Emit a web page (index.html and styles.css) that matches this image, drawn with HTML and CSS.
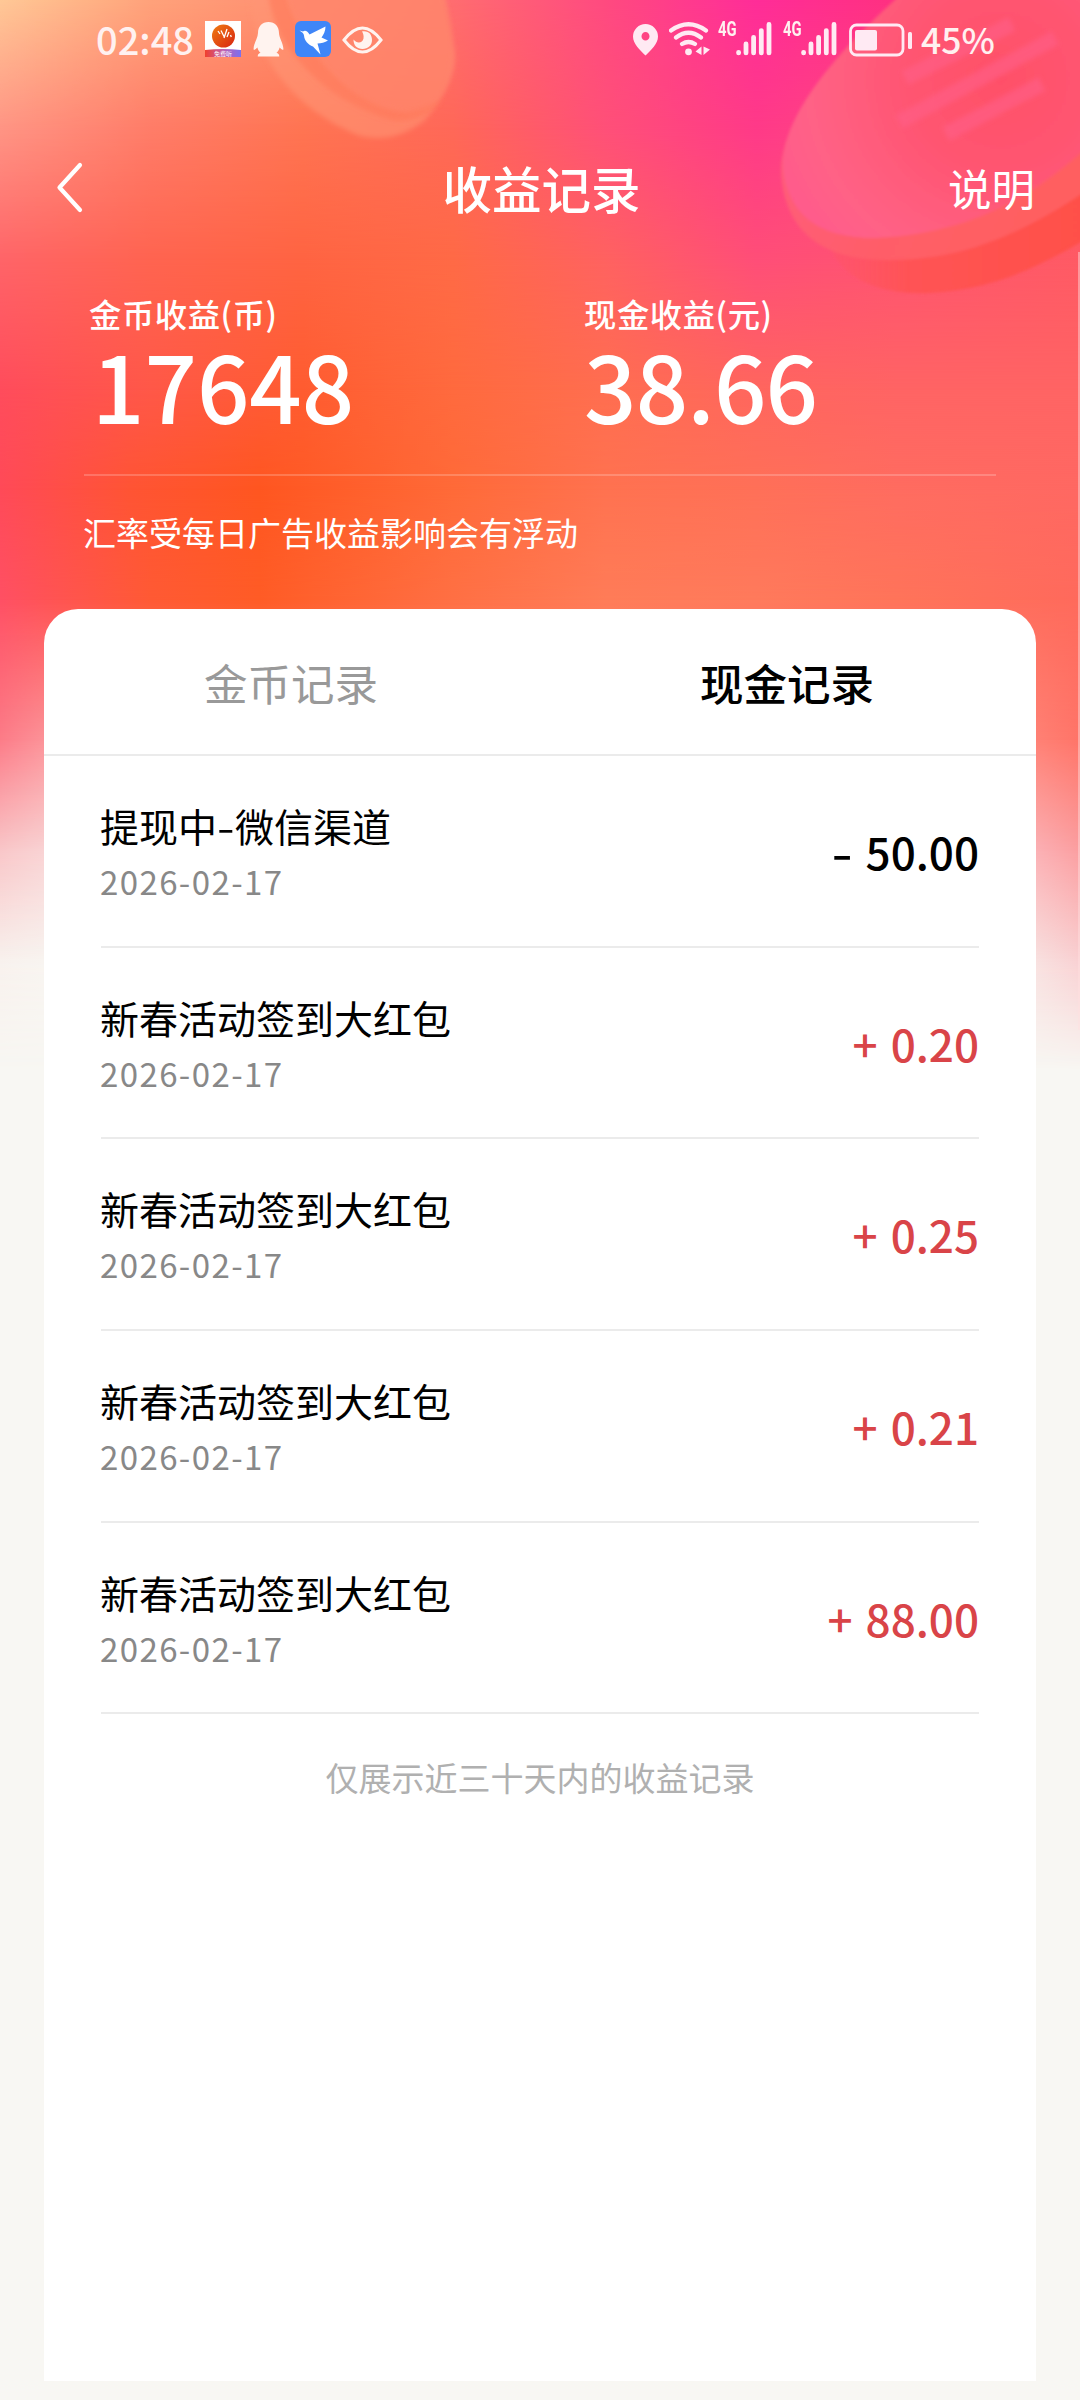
FILE: index.html
```html
<!DOCTYPE html>
<html lang="zh-CN">
<head>
<meta charset="utf-8">
<title>收益记录</title>
<link rel="stylesheet" href="styles.css">
</head>
<body>
<div class="screen">
  <div class="backdrop">
    <div class="band band-9"></div>
    <div class="band band-8"></div>
    <div class="band band-7"></div>
    <div class="band band-6"></div>
    <div class="band band-5"></div>
    <div class="band band-4"></div>
    <div class="band band-3"></div>
    <div class="band band-2"></div>
    <div class="band band-1"></div>
    <svg class="coins" width="1080" height="320" viewBox="0 0 1080 320">
      <defs>
        <linearGradient id="rim" x1="0" y1="0" x2="1" y2="0.4"><stop offset="0" stop-color="#ff5c84"/><stop offset=".6" stop-color="#ff5d68"/><stop offset="1" stop-color="#ff5f60"/></linearGradient>
        <radialGradient id="face" gradientUnits="userSpaceOnUse" cx="1000" cy="80" r="240"><stop offset="0" stop-color="#ff5068"/><stop offset=".35" stop-color="#ff5470"/><stop offset=".8" stop-color="#ff6286"/><stop offset="1" stop-color="#ff5a8c"/></radialGradient>
        <linearGradient id="shade" x1="0" y1="0" x2="1" y2="0"><stop offset="0" stop-color="#ff5560" stop-opacity=".3"/><stop offset=".3" stop-color="#ff5254"/><stop offset="1" stop-color="#ff5048"/></linearGradient>
        <filter id="soft"><feGaussianBlur stdDeviation="1.6"/></filter>
        <filter id="softer"><feGaussianBlur stdDeviation="2.5"/></filter>
      </defs>
      <path filter="url(#softer)" d="M250 -10C250 60 300 112 360 136Q395 144 425 120Q462 75 453 45L443 -10Z" fill="#ff9474" fill-opacity=".6"/>
      <path filter="url(#softer)" d="M268 -10C272 50 330 104 395 121Q425 122 442 100L407 111C350 108 300 45 285 -10Z" fill="#ff7456" fill-opacity=".55"/>
      <path filter="url(#softer)" d="M285 -10C300 45 350 108 407 111Q430 113 444 90Q462 50 442 -10Z" fill="#ff8068" fill-opacity=".55"/>
      <g filter="url(#soft)">
        <path d="M832 252C850 285 890 295 930 293C1000 288 1040 266 1095 234V120L900 180Z" fill="url(#shade)"/>
        <path d="M895 0C840 50 781 115 781 173C784 222 812 262 893 260C975 260 1040 222 1095 185V-10H905Z" fill="url(#rim)"/>
        <path d="M895 0C840 50 781 115 783 168C788 212 815 238 875 238C975 234 1040 192 1095 140V-10H905Z" fill="url(#face)"/>
      </g>
      <g filter="url(#softer)" stroke="#ff6088" stroke-width="15" stroke-opacity=".62">
        <path d="M905 78L1012 24M899 122L1055 38M946 134L1042 84"/>
      </g>
    </svg>
    <div class="edge"></div>
  </div>

  <header class="status">
    <div class="status-group left">
      <span class="clock">02:48</span>
      <svg class="app-icon" width="36" height="36" viewBox="0 0 36 36">
        <defs>
          <linearGradient id="swoosh" x1="0" y1="0" x2="1" y2="0"><stop offset="0" stop-color="#f0402c"/><stop offset=".5" stop-color="#c060b0"/><stop offset="1" stop-color="#7a70f0"/></linearGradient>
          <linearGradient id="ball" x1="0" y1="0" x2="1" y2="1"><stop offset="0" stop-color="#ef7d12"/><stop offset="1" stop-color="#d82412"/></linearGradient>
        </defs>
        <rect width="36" height="36" fill="#fff"/>
        <path d="M0 29Q18 27 36 29V36H0Z" fill="url(#swoosh)"/>
        <circle cx="18.500" cy="15" r="11.500" fill="url(#ball)"/>
        <path d="M13 10l2 3M16 9.500l3 6M19 17l3-9M22 16l2-5M25.500 14l.8 2" stroke="#fff" stroke-width="1.300" fill="none"/>
        <text class="app-label" x="18" y="34.500" text-anchor="middle">免费听</text>
      </svg>
      <svg class="penguin" width="31" height="36" viewBox="0 0 31 36">
        <path d="M15.500 1C9 1 5 5.500 5 12C5 17 .3 23 .6 28.500C1.500 29.500 3 28 4.400 26.500C5 29 6 30.500 7.500 31.800C5.800 32.500 4.500 33.500 4.800 35.500H26.200C26.500 33.500 25.200 32.500 23.500 31.800C25 30.500 26 29 26.600 26.500C28 28 29.500 29.500 30.400 28.500C30.700 23 26 17 26 12C26 5.500 22 1 15.500 1Z" fill="#fff3ef"/>
      </svg>
      <svg class="bird" width="36" height="36" viewBox="0 0 36 36">
        <rect width="36" height="36" rx="6" fill="#3f86f8"/>
        <path d="M4.500 9.500L8 10.500C10 8.800 12.800 10 14.500 13.500L30.500 5.500C30.500 10 28.500 14 26.500 16.500L33 19.500C30 21.500 26 22.500 22.500 22.500L25.500 33.500L18 25.500C13 23.500 9.500 20 9 14.500C8.800 12.500 7 11 4.500 9.500Z" fill="#fff"/>
      </svg>
      <svg class="eye" width="41" height="28" viewBox="0 0 41 28">
        <path d="M2 14Q20.500-10 39 14Q20.500 38 2 14Z" fill="none" stroke="#fff3ef" stroke-width="3"/>
        <path d="M20 5.500C27 4.500 30 9 30 14C30 19.500 26 23 20.500 23C15 23 11.500 19.500 11.500 13.500C15 18 20.500 17 21.500 12.500C22 9.500 21 7 20 5.500Z" fill="#fff3ef"/>
      </svg>
    </div>
    <div class="status-group right">
      <svg class="pin" width="25" height="32" viewBox="0 0 25 32">
        <path fill-rule="evenodd" d="M12.500 0A12.500 12.500 0 0 0 0 12.500C0 20 7 26 12.500 31.500C18 26 25 20 25 12.500A12.500 12.500 0 0 0 12.500 0ZM12.500 8A4 4.300 0 1 1 12.500 16.600A4 4.300 0 1 1 12.500 8Z" fill="#ffeaf3"/>
      </svg>
      <svg class="wifi" width="41" height="34" viewBox="0 0 41 34">
        <g fill="none" stroke="#ffeaf3" stroke-width="4.200" stroke-linecap="round">
          <path d="M2 8.500Q19.500-4 37 8.500M7 15.500Q19.500 6 32 15.500M13 22Q19.500 18 26 22"/>
        </g>
        <circle cx="19.500" cy="29.800" r="3.400" fill="#ffeaf3"/>
        <path d="M32.500 24.500V33L26.500 29.500ZM34.500 24.500V33L41 27.500Z" fill="#ffeaf3"/>
      </svg>
      <div class="signal">
        <span class="net">4G</span>
        <svg width="36" height="34" viewBox="0 0 36 34">
          <path d="M2.600 30.300V30.900M10 22V30.900M17.600 15.300V30.900M25.300 8.600V30.900M33 2.400V30.900" stroke="#ffeaf3" stroke-width="4.800" stroke-linecap="round"/>
        </svg>
      </div>
      <div class="signal">
        <span class="net">4G</span>
        <svg width="36" height="34" viewBox="0 0 36 34">
          <path d="M2.600 30.300V30.900M10 22V30.900M17.600 15.300V30.900M25.300 8.600V30.900M33 2.400V30.900" stroke="#ffeaf3" stroke-width="4.800" stroke-linecap="round"/>
        </svg>
      </div>
      <svg class="battery" width="64" height="34" viewBox="0 0 64 34">
        <rect x="1.500" y="2" width="52.500" height="30" rx="6" fill="none" stroke="#ffeaf3" stroke-width="2.800"/>
        <rect x="6" y="7" width="22" height="20.500" rx="2" fill="#ffeaf3"/>
        <rect x="59" y="9" width="4" height="17" rx="1.500" fill="#ffeaf3"/>
      </svg>
      <span class="percent">45%</span>
    </div>
  </header>

  <nav class="titlebar">
    <svg class="back" width="27" height="52" viewBox="0 0 27 52">
      <path d="M24 3L3.500 25.500L24 48" fill="none" stroke="#fff" stroke-width="4.200" stroke-linecap="round" stroke-linejoin="round"/>
    </svg>
    <h1 class="title">收益记录</h1>
    <span class="help">说明</span>
  </nav>

  <section class="summary">
    <div class="stat">
      <div class="stat-label">金币收益(币)</div>
      <div class="stat-value coins-total">17648</div>
    </div>
    <div class="stat">
      <div class="stat-label">现金收益(元)</div>
      <div class="stat-value cash-total">38.66</div>
    </div>
  </section>
  <p class="notice">汇率受每日广告收益影响会有浮动</p>

  <main class="card">
    <div class="tabs">
      <div class="tab">金币记录</div>
      <div class="tab active">现金记录</div>
    </div>
    <ul class="records">
      <li class="record"><div><div class="name">提现中<span class="dash">-</span>微信渠道</div><div class="date">2026-02-17</div></div><div class="amount"><span class="sign minus">-</span>50.00</div></li>
      <li class="record"><div><div class="name">新春活动签到大红包</div><div class="date">2026-02-17</div></div><div class="amount income"><span class="sign">+</span>0.20</div></li>
      <li class="record"><div><div class="name">新春活动签到大红包</div><div class="date">2026-02-17</div></div><div class="amount income"><span class="sign">+</span>0.25</div></li>
      <li class="record"><div><div class="name">新春活动签到大红包</div><div class="date">2026-02-17</div></div><div class="amount income"><span class="sign">+</span>0.21</div></li>
      <li class="record"><div><div class="name">新春活动签到大红包</div><div class="date">2026-02-17</div></div><div class="amount income"><span class="sign">+</span>88.00</div></li>
    </ul>
    <p class="footnote">仅展示近三十天内的收益记录</p>
  </main>
</div>
</body>
</html>
```
FILE: styles.css
```css
* { box-sizing: border-box; }
body { margin: 0; background: #f8f7f3; font-family: "Noto Sans CJK SC", sans-serif; color: #000; }
h1, p, ul { margin: 0; padding: 0; }
svg { display: block; flex: none; }

.screen {
  position: relative;
  display: flex;
  flex-direction: column;
  width: 1080px;
  height: 2400px;
  padding-bottom: 19px;
  overflow: hidden;
}
.screen > * { position: relative; flex: none; }

/* Colour wash: each band is solid down to --from, then dissolves into the next by --to */
.screen > .backdrop { position: absolute; top: 0; left: 0; width: 1080px; height: 1100px; overflow: hidden; }
.band {
  position: absolute;
  top: 0;
  left: 0;
  width: 100%;
  height: 100%;
  mask-image: linear-gradient(#000 var(--from), transparent var(--to));
}
.band-1 { --from: 0px; --to: 130px; background: linear-gradient(90deg, #ffc896, #ffa27a 14%, #ff8e70 28%, #ff6c70 42%, #ff4a80 56%, #ff2d98 70%, #ff3080 83%, #ff5068); }
.band-2 { --from: 130px; --to: 260px; background: linear-gradient(90deg, #ff9484, #ff7c68 14%, #ff7452 28%, #ff6858 42%, #ff5078 56%, #ff3a88 70%, #ff4a80 83%, #ff5868); }
.band-3 { --from: 260px; --to: 390px; background: linear-gradient(90deg, #ff6468, #ff6450 14%, #ff6442 28%, #ff6a46 42%, #ff6260 56%, #ff4e78 70%, #ff5470 83%, #ff5a64); }
.band-4 { --from: 390px; --to: 490px; background: linear-gradient(90deg, #ff4c5c, #ff5848 14%, #ff5c30 28%, #ff6a3e 42%, #ff6e50 56%, #ff665e 70%, #ff6464 83%, #ff6464); }
.band-5 { --from: 490px; --to: 600px; background: linear-gradient(90deg, #ff4a58, #ff5434 12%, #ff5620 24%, #ff6a38 42%, #ff7250 56%, #ff7058 70%, #ff6c60 83%, #ff6862); }
.band-6 { --from: 600px; --to: 740px; background: linear-gradient(90deg, #ff5064, #ff5a34 14%, #ff5c26 24%, #ff7044 42%, #ff7c58 56%, #ff7a5c 70%, #ff745a 83%, #ff6a5c); }
.band-7 { --from: 740px; --to: 850px; background: linear-gradient(90deg, #fc7c88, #fc9298 4%, #ff8478 95%, #ff7468); }
.band-8 { --from: 850px; --to: 960px; background: linear-gradient(90deg, #f9c6c8, #f9d2d3 4%, #fbb0b4 96%, #fb9ea0); }
.band-9 { --from: 960px; --to: 1070px; background: linear-gradient(90deg, #f8f1ed, #f8f4f0 4%, #f8e0df 96%, #f9d0d2); }
.coins { position: absolute; top: 0; left: 0; }
.edge { position: absolute; top: 252px; right: 0; width: 2px; height: 778px; background: rgba(255, 225, 225, .45); }

.status {
  display: flex;
  justify-content: space-between;
  height: 80px;
  padding: 0 92px 0 96px;
}
.status-group { display: flex; align-items: flex-start; height: 80px; color: #fff1f0; }
.clock, .percent { line-height: 78px; font-weight: 500; white-space: nowrap; }
.clock { width: 109px; font-size: 38px; }
.percent { width: 67px; margin-left: 8px; font-size: 35.500px; }
.app-icon { margin-top: 21px; }
.app-label { font-size: 6px; fill: #fff; }
.penguin { margin: 21px 0 0 12px; }
.bird { margin: 21px 0 0 11px; }
.eye { margin: 26px 0 0 11px; }
.pin { margin: 24px 11px 0 0; }
.wifi { margin: 22px 8px 0 0; }
.signal { display: flex; width: 53px; margin: 22px 12px 0 0; }
.net { width: 18px; font: 700 20px/15px "Roboto", sans-serif; transform: scaleX(.74); transform-origin: left; }
.battery { margin: 23px 0 0 1px; }

.titlebar { display: grid; grid-template-columns: 1fr auto 1fr; align-items: center; height: 220px; padding: 0 45px 4px 56px; color: #fff; }
.back { align-self: center; }
.title { margin: 0 18px 0 10px; font-size: 49.500px; font-weight: 500; line-height: 60px; }
.help { justify-self: end; font-size: 43.500px; line-height: 60px; }

.summary { display: grid; grid-template-columns: 495px 1fr; margin: -10px 84px 0; padding-left: 5px; height: 186px; border-bottom: 2px solid rgba(255, 255, 255, .2); color: #fff; }
.stat-label { margin-top: 3px; font-size: 32.300px; font-weight: 500; line-height: 40px; letter-spacing: .6px; white-space: nowrap; }
.stat-value { margin-top: 1px; font-size: 92px; font-weight: 500; line-height: 100px; }
.coins-total { padding-left: 3px; }
.cash-total { letter-spacing: -.8px; }
.notice { height: 133px; padding-left: 83px; font-size: 33px; line-height: 112px; color: #fff; }

.screen > .card { flex: 1; margin: 0 44px; background: #fff; border-radius: 34px 34px 0 0; }
.tabs { display: grid; grid-template-columns: 1fr 1fr; height: 147px; border-bottom: 2px solid #ebebeb; }
.tab { margin-left: -2px; font-size: 43.500px; line-height: 148px; text-align: center; color: #999; }
.tab.active { font-weight: 500; color: #000; }
.records { padding: 0 57px; list-style: none; }
.record { display: flex; align-items: center; justify-content: space-between; height: 191.700px; border-bottom: 2px solid #ebebeb; }
.name { padding-top: 6px; font-size: 39px; line-height: 54px; margin-left: -1px; }
.dash { display: inline-block; width: 18px; transform: scaleX(1.3); transform-origin: left; }
.date { margin-left: -1px; font-size: 33px; line-height: 58px; letter-spacing: 1.400px; color: #888; }
.amount { font-size: 44px; font-weight: 500; line-height: 60px; }
.sign { margin-right: 13px; }
.minus { display: inline-block; transform: scaleX(1.35); transform-origin: right; }
.income { color: #d94448; }
.footnote { margin-top: 39px; font-size: 33px; line-height: 48px; text-align: center; color: #b0b0b0; }
```
